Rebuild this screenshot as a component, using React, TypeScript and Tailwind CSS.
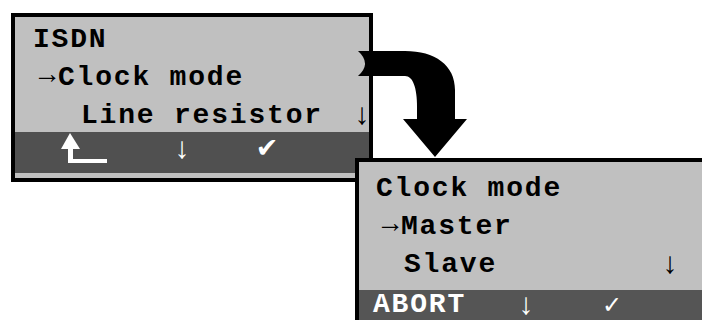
import React from 'react';

const mono = { fontFamily: '"Liberation Mono", "Courier New", monospace' };
const serif = { fontFamily: '"Liberation Serif", "DejaVu Serif", serif' };
const sym = { fontFamily: '"DejaVu Sans", sans-serif' };

const Arrow = () => (
  <span className="block w-[25px] mb-[9px] text-[28px] font-normal leading-none tracking-normal" style={serif}>
    →
  </span>
);

const Down = ({ className = '' }: { className?: string }) => (
  <span className={`block w-[30px] text-center text-[30px] font-normal leading-none tracking-normal ${className}`} style={serif}>
    ↓
  </span>
);

const ReturnIcon = () => (
  <svg width="48" height="32" viewBox="0 0 48 32" className="block">
    <polygon points="9,0 0,16 19,16" fill="#fff" />
    <rect x="7" y="15" width="5" height="15" fill="#fff" />
    <rect x="7" y="26" width="39" height="4" fill="#fff" />
  </svg>
);

const CurvedArrow = () => (
  <svg width="120" height="125" viewBox="0 0 120 125" className="absolute left-[355px] top-[40px]">
    <path
      d="M3,11 L50,11 C80,11 100,25 100,50 L100,79 L112,79 L80,117 L48,79 L62,79 L62,67 C62,48 58,36 50,36 L3,36 Q17,23.5 3,11 Z"
      fill="#000"
    />
  </svg>
);

export default function App() {
  return (
    <div className="relative w-[702px] h-[320px] bg-white overflow-hidden" style={mono}>
      {/* first screen */}
      <div className="absolute left-[11px] top-[13px] w-[362px] h-[169px] border-4 border-black bg-[#c0c0c0] flex flex-col">
        <div className="h-[115px] pl-[18px] pt-[4px] text-[28px] font-bold tracking-[1.8px] text-black">
          <div className="h-[38px] leading-[38px]">ISDN</div>
          <div className="h-[38px] leading-[38px] whitespace-pre flex items-center">
            <Arrow />
            <span>Clock mode</span>
          </div>
          <div className="h-[38px] leading-[38px] whitespace-pre flex items-center">
            <span className="ml-[48px]">Line resistor</span>
            <Down className="ml-auto -mr-[8px] -mt-[4px] text-black" />
          </div>
        </div>
        <div className="h-[41px] bg-[#505050] text-white flex items-start pl-[14px]">
          <div className="w-[138px] pl-[32px] pt-[1px]">
            <ReturnIcon />
          </div>
          <Down className="pt-[1px]" />
          <span className="w-[30px] ml-[55px] pt-[2px] text-center text-[27px] leading-none" style={sym}>
            ✔
          </span>
        </div>
      </div>

      <CurvedArrow />

      {/* second screen */}
      <div className="absolute left-[355px] top-[158px] w-[360px] h-[180px] border-l-4 border-t-4 border-black bg-[#c0c0c0] flex flex-col">
        <div className="h-[128px] pl-[17px] pt-[8px] text-[28px] font-bold tracking-[1.8px] text-black">
          <div className="h-[38px] leading-[38px]">Clock mode</div>
          <div className="h-[38px] leading-[38px] whitespace-pre flex items-center">
            <Arrow />
            <span>Master</span>
          </div>
          <div className="h-[38px] leading-[38px] whitespace-pre flex items-center">
            <span className="ml-[28px] w-[251px]">Slave</span>
            <Down className="-mt-[4px]" />
          </div>
        </div>
        <div className="h-[40px] bg-[#555555] text-white flex items-start pl-[14px]">
          <span className="w-[138px] text-[28px] font-bold tracking-[1.8px] leading-[30px]">ABORT</span>
          <Down className="-mt-[1px]" />
          <span className="w-[30px] ml-[56px] pt-[3px] text-center text-[24px] leading-none" style={sym}>
            ✓
          </span>
        </div>
      </div>
    </div>
  );
}
